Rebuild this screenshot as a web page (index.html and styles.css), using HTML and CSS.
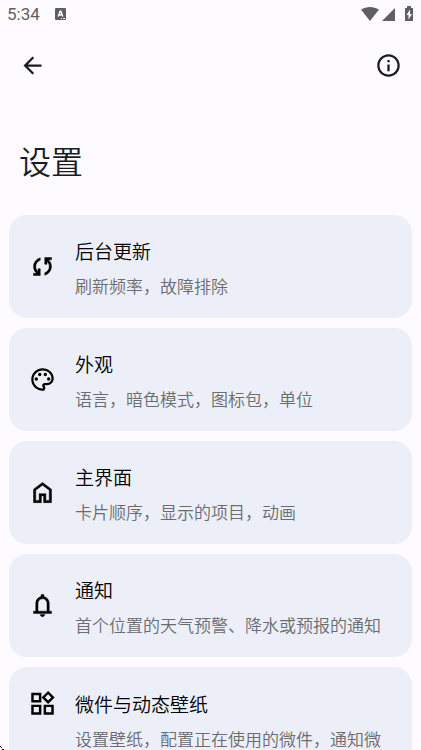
FILE: index.html
```html
<!DOCTYPE html>
<html lang="zh-CN">
<head>
<meta charset="utf-8">
<meta name="viewport" content="width=device-width, initial-scale=1">
<title>设置</title>
<link rel="stylesheet" href="styles.css">
</head>
<body>
<div class="screen">
  <div class="status">
    <span class="time">5:34</span>
    <svg class="status-app" viewBox="0 0 11 12" aria-hidden="true"><rect width="11" height="12" rx="1" fill="#5f5f62"/><path d="M3.200 8.500 5.200 3.200h.6l2 5.300M4 7h3" fill="none" stroke="#fff" stroke-width="1.400"/><path d="M6 10.500h1m1 0h2" stroke="#fff" stroke-width="1"/></svg>
    <svg class="status-signals" viewBox="0 0 54 16" aria-hidden="true">
      <path d="M1 3.500C6.500 0 13.500 0 19 3.500L10 15z" fill="#5f5f62"/>
      <path d="M35 2v13H22z" fill="#5f5f62"/>
      <path d="M47 0h4v2h2v13h-8V2h2z" fill="#5f5f62"/>
      <path d="M50 3.500 46.500 9h2v4.500L52 8h-2z" fill="#fff"/>
    </svg>
  </div>
  <header class="bar">
    <button class="icon-button" aria-label="返回"><svg class="icon" viewBox="0 0 24 24"><path d="M20 11H7.830l5.590-5.590L12 4l-8 8 8 8 1.410-1.410L7.830 13H20z"/></svg></button>
    <button class="icon-button" aria-label="关于"><svg class="icon" viewBox="0 0 24 24"><path d="M11 7h2v2h-2zm0 4h2v6h-2zm1-9C6.480 2 2 6.480 2 12s4.480 10 10 10 10-4.480 10-10S17.520 2 12 2zm0 18c-4.410 0-8-3.590-8-8s3.590-8 8-8 8 3.590 8 8-3.590 8-8 8z"/></svg></button>
  </header>
  <h1 class="heading">设置</h1>
  <main class="cards">
    <a class="card" href="#background">
      <svg class="icon icon-bold" viewBox="0 0 24 24"><path d="M4 20v-2h2.750l-.4-.350Q5.050 16.500 4.525 15.025T4 12.050Q4 9.275 5.663 7.113T10 4.250v2.100Q8.200 7 7.100 8.563T6 12.050q0 1.125.425 2.188T7.750 16.200l.25.250V14h2v6zm10-.250v-2.100q1.800-.650 2.900-2.213T18 11.950q0-1.125-.425-2.188T16.250 7.800L16 7.550V10h-2V4h6v2h-2.750l.4.350q1.225 1.225 1.788 2.663T20 11.950q0 2.775-1.663 4.938T14 19.750z"/></svg>
      <span class="text"><span class="title">后台更新</span><span class="detail">刷新频率，故障排除</span></span>
    </a>
    <a class="card" href="#appearance">
      <svg class="icon" viewBox="0 0 24 24"><path d="M12 22C6.490 22 2 17.510 2 12S6.490 2 12 2s10 4.040 10 9c0 3.310-2.690 6-6 6h-1.770c-.28 0-.5.220-.5.500 0 .120.050.230.130.330.410.470.640 1.060.640 1.670A2.500 2.500 0 0 1 12 22zm0-18c-4.410 0-8 3.590-8 8s3.590 8 8 8c.28 0 .5-.220.500-.500a.54.540 0 0 0-.140-.350c-.410-.460-.630-1.050-.630-1.650a2.500 2.500 0 0 1 2.500-2.500H16c2.210 0 4-1.790 4-4 0-3.860-3.590-7-8-7z"/><circle cx="6.500" cy="11.500" r="1.500"/><circle cx="9.500" cy="7.500" r="1.500"/><circle cx="14.500" cy="7.500" r="1.500"/><circle cx="17.500" cy="11.500" r="1.500"/></svg>
      <span class="text"><span class="title">外观</span><span class="detail">语言，暗色模式，图标包，单位</span></span>
    </a>
    <a class="card" href="#main-screen">
      <svg class="icon icon-bold" viewBox="0 0 24 24"><path d="M6 19h3v-6h6v6h3v-9l-6-4.500L6 10zm-2 2V9l8-6 8 6v12h-7v-6h-2v6z"/></svg>
      <span class="text"><span class="title">主界面</span><span class="detail">卡片顺序，显示的项目，动画</span></span>
    </a>
    <a class="card" href="#notifications">
      <svg class="icon icon-bold" viewBox="0 0 24 24"><path d="M4 19v-2h2v-7c0-2.800 1.900-5.200 4.500-5.800V3.500a1.500 1.500 0 0 1 3 0v.7C16.100 4.800 18 7.200 18 10v7h2v2zm4-2h8v-7c0-2.200-1.800-4-4-4s-4 1.800-4 4zm4 5c-1.100 0-2-.9-2-2h4c0 1.100-.9 2-2 2z"/></svg>
      <span class="text"><span class="title">通知</span><span class="detail">首个位置的天气预警、降水或预报的通知</span></span>
    </a>
    <a class="card card-top" href="#widgets">
      <svg class="icon" viewBox="0 0 24 24"><path fill-rule="evenodd" d="M2 2.500h9v8.500H2zm2.200 2.200v4.100h4.600V4.700zM17 .8 22.800 6.600 17 12.400 11.200 6.600zm0 3-2.800 2.800L17 9.400l2.800-2.800zM2 13h9v9H2zm2.200 2.200v4.600h4.600v-4.600zM13 13h9v9h-9zm2.200 2.200v4.600h4.600v-4.600z"/></svg>
      <span class="text"><span class="title">微件与动态壁纸</span><span class="detail">设置壁纸，配置正在使用的微件，通知微</span></span>
    </a>
  </main>
  <svg class="corner" viewBox="0 0 4 4" aria-hidden="true"><path d="M0 0h1v1H0zM1 1h1v1H1zM2 3h2v1H2z"/></svg>
</div>
</body>
</html>
```
FILE: styles.css
```css
* { box-sizing: border-box; }

body {
  margin: 0;
  background: #fdfbff;
  color: #1a1b1f;
  font-family: Roboto, "Noto Sans CJK SC", sans-serif;
}

.screen {
  height: 100vh;
  overflow: hidden;
}

.status {
  display: flex;
  align-items: center;
  height: 28px;
  padding: 0 7px;
  color: #5f5f62;
}

.time {
  font-size: 17px;
  line-height: 20px;
}

.status-app {
  width: 11px;
  height: 12px;
  margin-left: 15px;
}

.status-signals {
  width: 54px;
  height: 16px;
  margin-left: auto;
}

.bar {
  display: flex;
  justify-content: space-between;
  padding: 14px 10px 14px 9px;
}

.icon-button {
  display: grid;
  place-items: center;
  width: 46px;
  height: 46px;
  padding: 0;
  border: 0;
  border-radius: 50%;
  background: none;
  color: inherit;
}

.icon {
  flex: none;
  width: 27px;
  height: 27px;
  fill: currentColor;
}

.icon-bold {
  stroke: currentColor;
  stroke-width: 0.4;
}

.heading {
  margin: 37px 19px 28px;
  font-size: 32px;
  font-weight: 350;
  line-height: 48px;
}

.cards {
  display: flex;
  flex-direction: column;
  gap: 10px;
  padding: 0 9px;
}

.card {
  display: flex;
  flex: none;
  align-items: center;
  gap: 19px;
  min-height: 103px;
  padding: 16px 18px 16px 20px;
  border-radius: 18px;
  background: #eceff8;
  color: #000;
  font-weight: 350;
  text-decoration: none;
}

.card-top {
  align-items: flex-start;
  min-height: 126px;
  padding-top: 23px;
}

.text {
  display: flex;
  flex-direction: column;
  gap: 6px;
  padding-top: 7px;
}

.card-top .text {
  padding-top: 2px;
}

.title {
  font-size: 19px;
  line-height: 28px;
}

.detail {
  color: #6b6c70;
  font-size: 17px;
  line-height: 28px;
}

.corner {
  position: absolute;
  bottom: 0;
  left: 0;
  width: 4px;
  height: 4px;
}
```
